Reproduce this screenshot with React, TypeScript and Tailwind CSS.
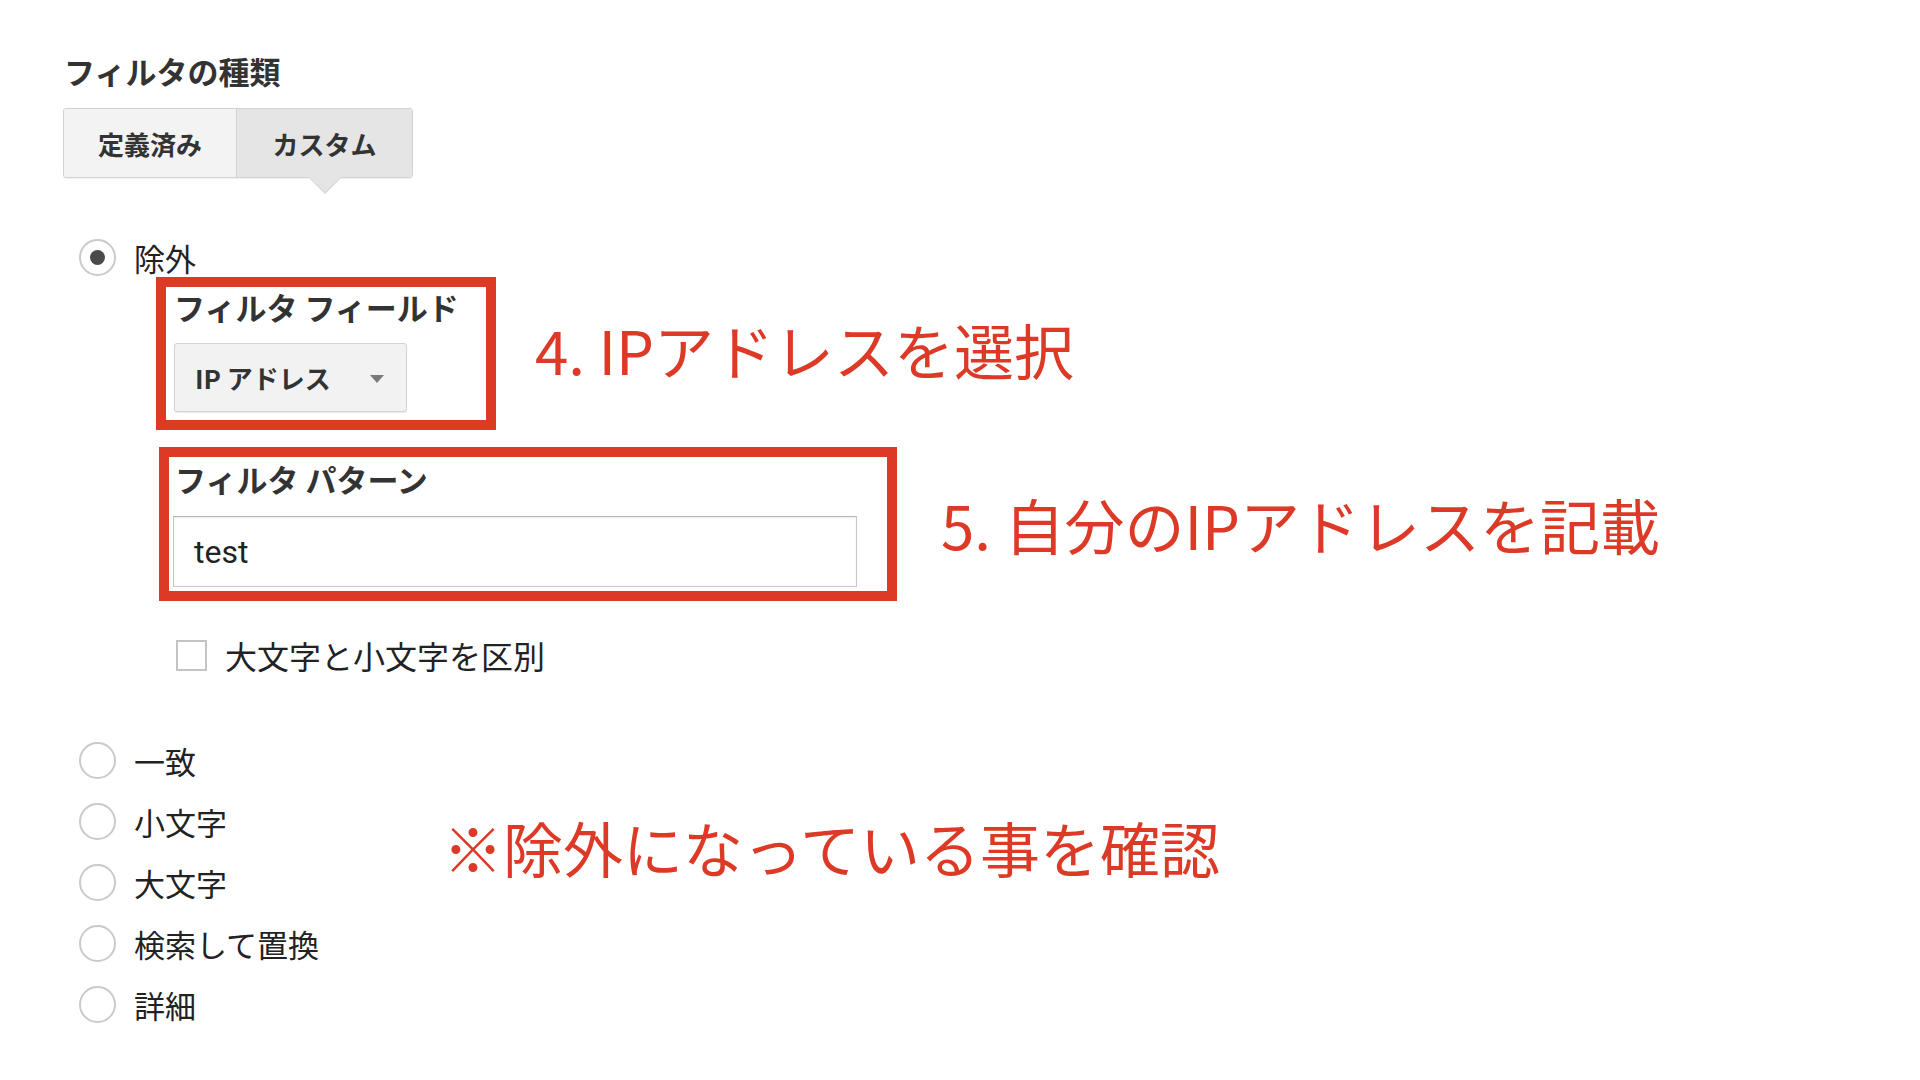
import React from "react";

const JP = "font-['Noto_Sans_CJK_JP','Noto_Sans',sans-serif]";

function Radio({ checked = false }: { checked?: boolean }) {
  return (
    <span className="flex h-[37px] w-[37px] shrink-0 items-center justify-center rounded-full border-2 border-[#cacaca] bg-white">
      {checked && <span className="h-[15px] w-[15px] rounded-full bg-[#4a4a4a]" />}
    </span>
  );
}

function RadioRow({ label }: { label: string }) {
  return (
    <div className="flex h-[61px] items-center gap-[18px]">
      <Radio />
      <span className="text-[31px] leading-none text-[#222]">{label}</span>
    </div>
  );
}

export default function App() {
  return (
    <div className={`min-h-screen w-full bg-white pl-[64px] pt-[49px] ${JP}`}>
      <h2 className="text-[31px] font-bold leading-[44px] text-[#333]">フィルタの種類</h2>

      <div className="mt-[15px] ml-[-1px] flex w-fit rounded-[3px] border border-[#d2d2d2] shadow-[0_1px_1px_rgba(0,0,0,0.06)]">
        <div className="flex h-[68px] w-[172px] items-center justify-center rounded-l-[3px] bg-[#f3f3f3] text-[26px] font-bold text-[#333]">
          定義済み
        </div>
        <div className="relative flex h-[68px] w-[176px] items-center justify-center rounded-r-[3px] border-l border-[#d2d2d2] bg-[#e5e5e5] text-[26px] font-bold text-[#333]">
          カスタム
          <span className="absolute left-1/2 top-full h-0 w-0 -translate-x-1/2 border-x-[17px] border-t-[17px] border-x-transparent border-t-[#d6d6d6]" />
          <span className="absolute left-1/2 top-full h-0 w-0 -translate-x-1/2 border-x-[16px] border-t-[15px] border-x-transparent border-t-[#e5e5e5]" />
        </div>
      </div>

      <div className="mt-[62px] ml-[15px] flex h-[34px] items-center gap-[18px]">
        <Radio checked />
        <span className="text-[31px] leading-none text-[#222]">除外</span>
      </div>

      <div className="mt-[3px] ml-[92px] flex items-center gap-[39px]">
        <div className="h-[153px] w-[340px] border-[10px] border-[#dc3a26] pl-[8px] pt-[2px]">
          <div className="text-[31px] font-bold leading-[36px] text-[#333]">フィルタ フィールド</div>
          <div className="relative mt-[18px] flex h-[69px] w-[233px] items-center rounded-[3px] border border-[#d3d3d3] bg-[#f2f2f2] pl-[20px] shadow-[0_1px_1px_rgba(0,0,0,0.08)]">
            <span className="text-[26px] font-bold text-[#333]">IP アドレス</span>
            <span className="absolute left-[195px] top-[31px] h-0 w-0 border-x-[7px] border-t-[8px] border-x-transparent border-t-[#7a7a7a]" />
          </div>
        </div>
        <div className="mb-[10px] text-[60px] leading-none text-[#dc3a26]">4. IPアドレスを選択</div>
      </div>

      <div className="mt-[17px] ml-[95px] flex items-center gap-[44px]">
        <div className="h-[154px] w-[738px] border-[10px] border-[#dc3a26] pl-[4px] pt-[5px]">
          <div className="pl-[2px] text-[31px] font-bold leading-[34px] text-[#333]">フィルタ パターン</div>
          <div className="mt-[20px] flex h-[71px] w-[684px] items-center border border-[#c8c8c8] border-t-[#b5b5b5] bg-white pl-[20px] shadow-[inset_0_1px_2px_rgba(0,0,0,0.08)]">
            <span className="font-['Roboto',sans-serif] text-[32px] text-[#222]">test</span>
          </div>
        </div>
        <div className="text-[60px] leading-none text-[#dc3a26]">5. 自分のIPアドレスを記載</div>
      </div>

      <div className="mt-[34px] ml-[112px] flex h-[40px] items-center gap-[18px]">
        <span className="h-[31px] w-[31px] shrink-0 border-2 border-[#c4c4c4] bg-white" />
        <span className="text-[32px] leading-none text-[#222]">大文字と小文字を区別</span>
      </div>

      <div className="mt-[55px] ml-[15px] flex items-start">
        <div className="flex w-[364px] flex-col">
          <RadioRow label="一致" />
          <RadioRow label="小文字" />
          <RadioRow label="大文字" />
          <RadioRow label="検索して置換" />
          <RadioRow label="詳細" />
        </div>
        <div className="mt-[87px] text-[60px] leading-none text-[#dc3a26]">※除外になっている事を確認</div>
      </div>
    </div>
  );
}
